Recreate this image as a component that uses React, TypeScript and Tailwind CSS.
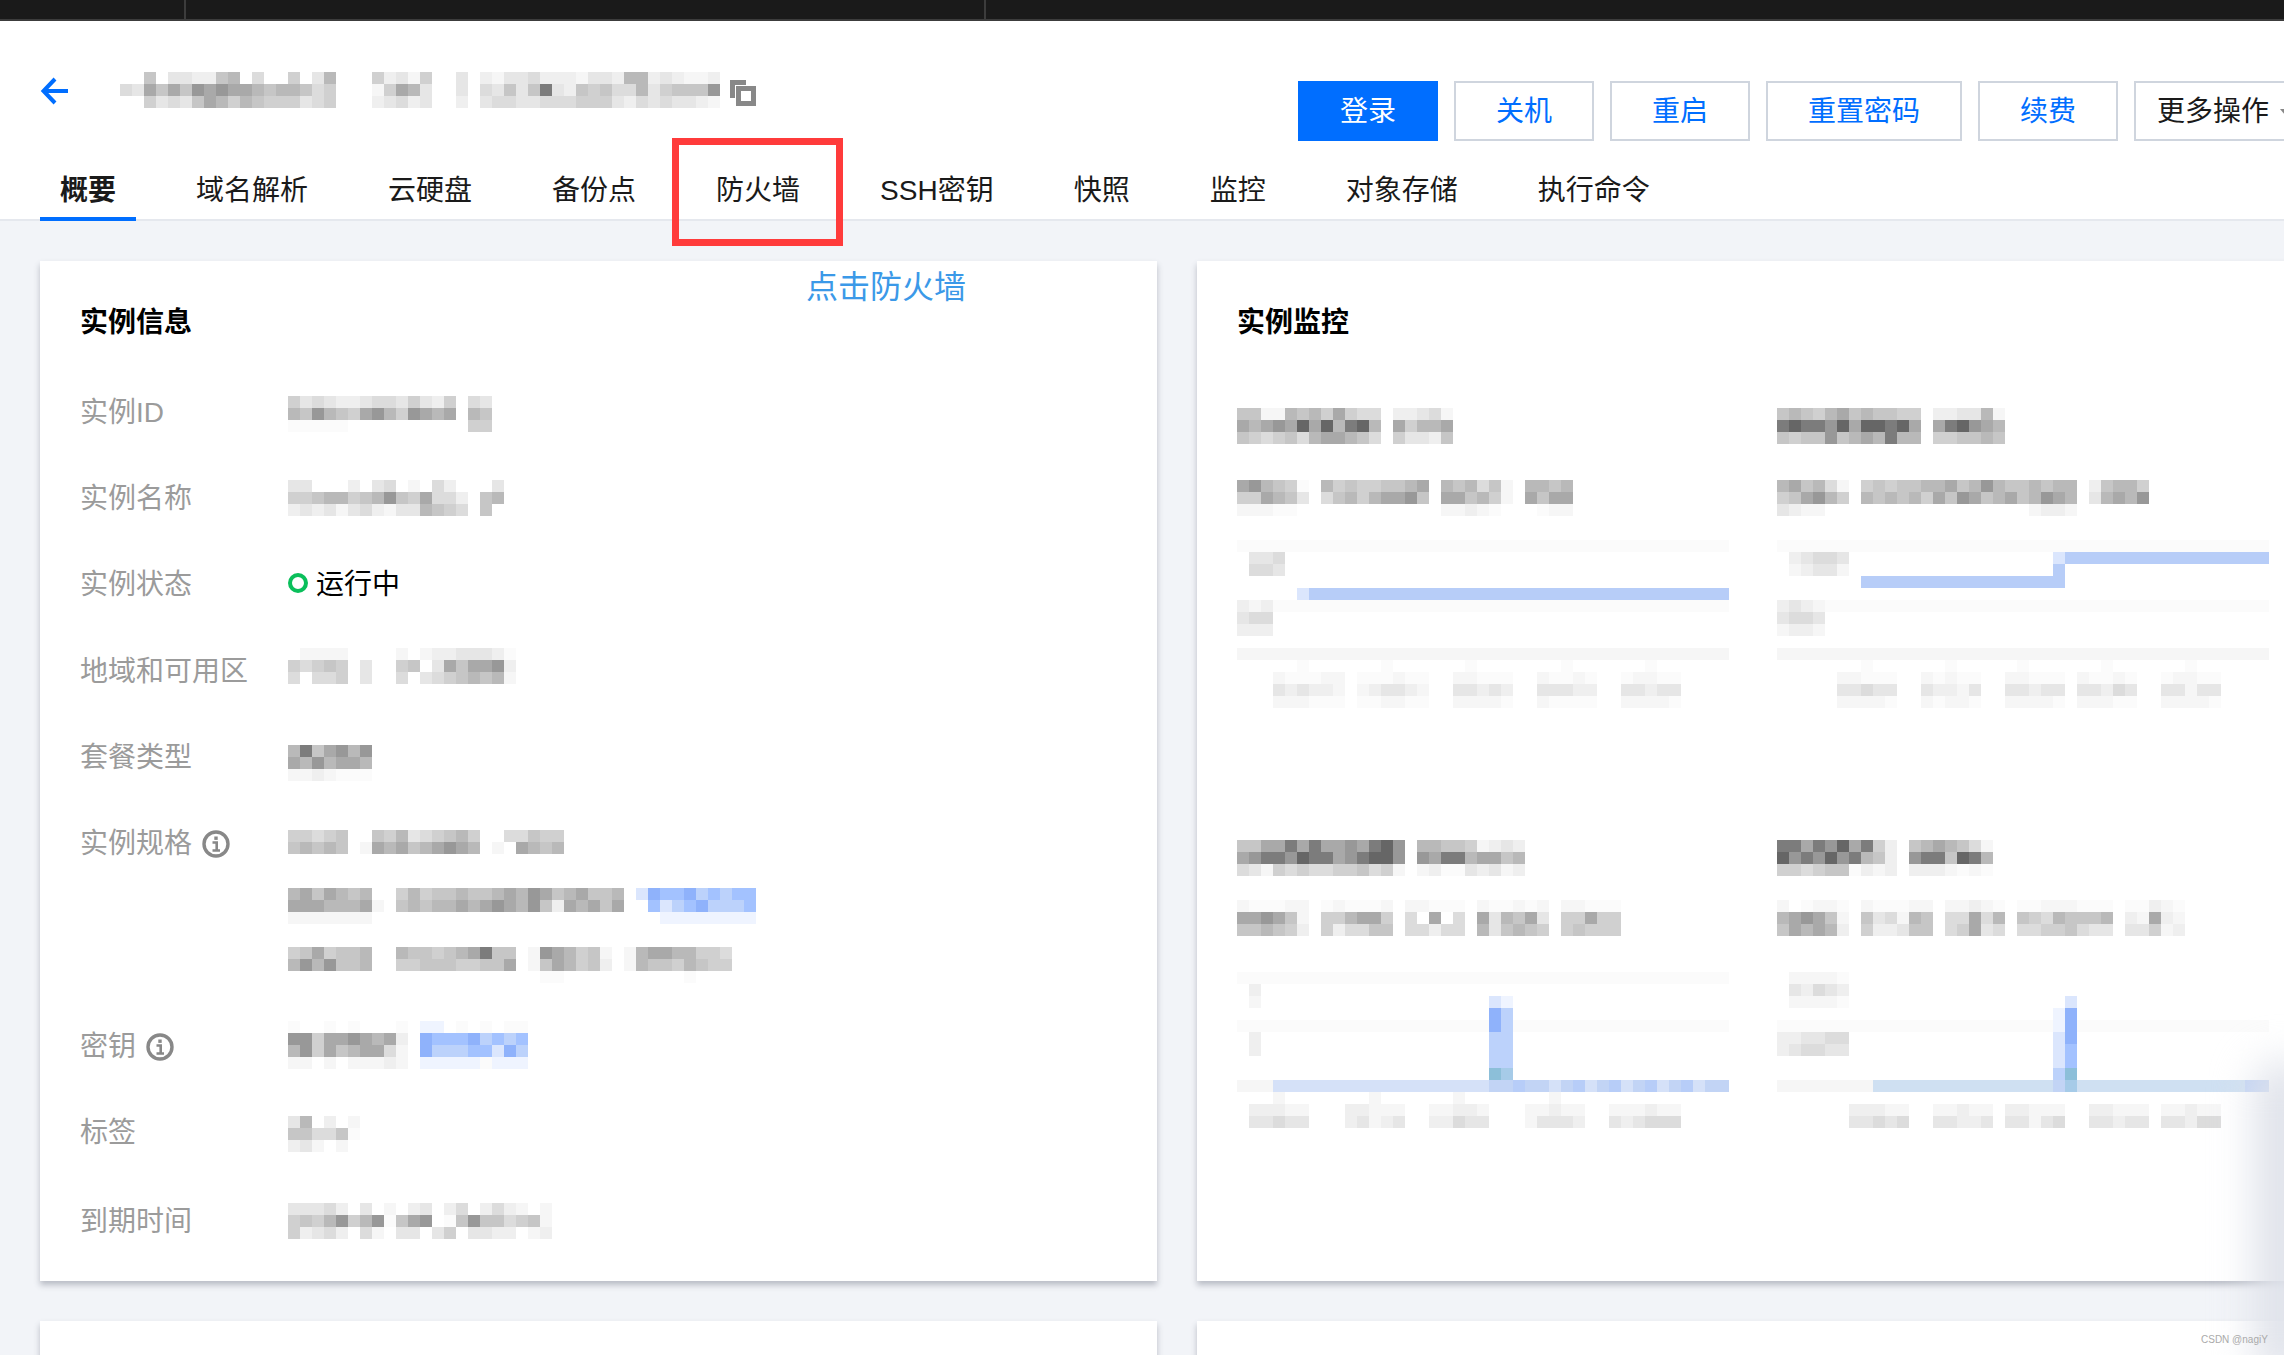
const palette: Record<string, string> = {
  "0": "#fbfbfb", "1": "#f6f6f6", "2": "#efefef", "3": "#e6e6e6", "4": "#dcdcdc", "5": "#d0d0d0",
  "6": "#c6c6c6", "7": "#b9b9b9", "8": "#a9a9a9", "9": "#989898", x: "#7c7c7c", y: "#666666",
  a: "#8fb2fb", b: "#a3c2ff", c: "#bcd2fb", d: "#dbe6fd", e: "#eff4ff", f: "#b7cdf8",
  g: "#8cbfd9", h: "#a6cbe8", i: "#d5e1f8", j: "#cfe0f2", k: "#c2d4f5",
};

// blurred-out text and charts are drawn as a grid of 12px cells
const Mosaic = ({ rows, className = "" }: { rows: string[]; className?: string }) => {
  const cols = Math.max(...rows.map((r) => r.length));
  return (
    <svg width={cols * 12} height={rows.length * 12} shapeRendering="crispEdges" className={`block shrink-0 ${className}`}>
      {rows.map((row, y) =>
        row.split("").map((c, x) =>
          palette[c] ? <rect key={`${x}-${y}`} x={x * 12} y={y * 12} width={12} height={12} fill={palette[c]} /> : null
        )
      )}
    </svg>
  );
};

const sp = (n: number) => ".".repeat(n);
const fill = (c: string, n = 41) => c.repeat(n);

const InfoIcon = () => (
  <svg width="28" height="28" viewBox="0 0 28 28" fill="none" className="shrink-0">
    <circle cx="14" cy="14" r="12" stroke="#888" strokeWidth="3.4" />
    <rect x="12.3" y="6.5" width="3.4" height="3.4" fill="#888" />
    <path d="M10.5 12.5h4.2v7.5M10.5 20.5h7.5" stroke="#888" strokeWidth="2.6" />
  </svg>
);

const tabs = ["概要", "域名解析", "云硬盘", "备份点", "防火墙", "SSH密钥", "快照", "监控", "对象存储", "执行命令"];
const actions = ["关机", "重启", "重置密码", "续费"];

const Label = ({ text, info }: { text: string; info?: boolean }) => (
  <div className="flex items-center gap-[10px] w-[208px] h-[86px] pt-[4px] shrink-0 text-[#9b9b9b]">
    {text}
    {info && <InfoIcon />}
  </div>
);

const InfoRow = ({ text, info, className = "", children }: { text: string; info?: boolean; className?: string; children: React.ReactNode }) => (
  <div className={`flex items-center h-[86px] ${className}`}>
    <Label text={text} info={info} />
    {children}
  </div>
);

const Monitor = ({ title, sub, chart }: { title: string[]; sub: string[]; chart: string[] }) => (
  <div className="flex flex-col">
    <Mosaic rows={title} />
    <Mosaic rows={sub} className="mt-[24px]" />
    <Mosaic rows={chart} className="mt-[24px]" />
  </div>
);

const chartA = [
  fill("0"),
  ".334",
  ".443",
  "",
  sp(5) + "d" + fill("f", 35),
  "212" + fill("0", 38),
  "344",
  "222",
  "",
  fill("1"),
  sp(5) + "0" + sp(6) + "0" + sp(6) + "0" + sp(7) + "0" + sp(6) + "0",
  "...100011.000100..11000..10010..01100....",
  "...323221.123321..33232..33322..33233....",
  "...111000.001100..11110..10000..11110....",
];

const chartB = [
  fill("0"),
  ".23443" + sp(17) + "d" + fill("f", 17),
  ".12331" + sp(17) + "f",
  sp(7) + fill("f", 17),
  "",
  "2321" + fill("0", 37),
  "3443",
  "1221",
  "",
  fill("1"),
  sp(7) + "0" + sp(6) + "0" + sp(5) + "0" + sp(6) + "0" + sp(6) + "0",
  ".....11000..10100..11000.10010..01100....",
  ".....33433..32213..33233.33243..33133....",
  ".....11110..10110..11110.11100..11110....",
];

const chartC = [
  fill("0"),
  ".2",
  ".1" + sp(19) + "de",
  sp(21) + "ac",
  fill("0", 21) + "ac" + fill("0", 18),
  ".2" + sp(19) + "cc",
  ".2" + sp(19) + "cc",
  sp(21) + "cc",
  sp(21) + "gh",
  "111" + fill("i", 18) + "kkfkkikfikfikfikfikk",
  "...1.......1......1.......1",
  ".22211...22111..11221...11211..111211....",
  ".33433...23123..22433...13332..323444....",
];

const chartD = [
  ".11110",
  ".32432",
  ".11110" + sp(18) + "d",
  sp(23) + "ea",
  fill("0", 23) + "ea" + fill("0", 16),
  "223344" + sp(17) + "da",
  "234433" + sp(17) + "db",
  sp(23) + "db",
  sp(23) + "cg",
  fill("1", 8) + fill("j", 15) + "kh" + fill("j", 14) + "kk",
  "",
  "......22211..11211.22111..22111.11211....",
  "......33434..33223.33134..33233.33244....",
];

const App = () => {
  return (
    <div className="relative w-[2284px] h-[1355px] overflow-hidden bg-[#f2f4f8] text-[28px] text-[#1a1a1a] font-['Liberation_Sans','Noto_Sans_CJK_SC',sans-serif]">
      <div className="flex h-[21px] bg-[#1a1a1a] border-b-2 border-[#3c3c3c]">
        <div className="w-[186px] border-r-2 border-[#3c3c3c]" />
        <div className="w-[800px] border-r-2 border-[#3c3c3c]" />
      </div>

      <div className="bg-white">
        <div className="flex justify-between items-start h-[120px] pl-[40px]">
          <div className="flex items-center mt-[51px]">
            <svg width="28" height="28" viewBox="0 0 28 28" fill="none" className="mr-[52px] mt-[2px]">
              <path d="M15 2 3.5 14 15 26M4 14h24" stroke="#006eff" strokeWidth="4" />
            </svg>
            <Mosaic
              rows={[
                "..6.332267.4..5.37...52315..3.21334222133277232112",
                "438686989887677645...15873..3.43636x32656447356669",
                "..5343687576555345...23423..2.34433444555324343321",
              ]}
            />
            <svg width="26" height="26" viewBox="0 0 26 26" className="ml-[10px] mt-[6px]" fill="none">
              <path d="M16 2.5H2.5V18" stroke="#888" strokeWidth="5" />
              <rect x="8.5" y="8.5" width="15" height="15" stroke="#888" strokeWidth="5" />
            </svg>
          </div>
          <div className="flex gap-[16px] mt-[60px] mr-[-30px]">
            <div className="flex items-center justify-center h-[60px] w-[140px] pt-[2px] bg-[#006eff] text-white">登录</div>
            {actions.map((a) => (
              <div key={a} className="flex items-center h-[60px] px-[40px] pt-[2px] bg-white border-2 border-[#cfd5de] text-[#006eff]">
                {a}
              </div>
            ))}
            <div className="flex items-center h-[60px] w-[180px] pl-[21px] pt-[2px] bg-white border-2 border-[#cfd5de] shrink-0">
              更多操作
              <svg width="10" height="6" viewBox="0 0 10 6" className="ml-[11px] shrink-0">
                <path d="M0 0h10L5 6z" fill="#888" />
              </svg>
            </div>
          </div>
        </div>

        <div className="flex gap-[40px] h-[80px] pl-[40px] border-b-2 border-[#e5e8ee]">
          {tabs.map((t, i) => (
            <div
              key={t}
              className={
                i === 0
                  ? "h-[80px] px-[20px] pt-[24px] border-b-4 border-[#006eff] font-bold flex items-center"
                  : "h-[80px] px-[20px] pt-[24px] border-b-4 border-transparent flex items-center"
              }
            >
              {t}
            </div>
          ))}
        </div>
      </div>

      <div className="grid grid-cols-[1117px_1117px] gap-[40px] pt-[40px] pl-[40px]">
        <div className="h-[1020px] bg-white shadow-[0_4px_6px_rgba(54,58,80,0.3)] px-[40px] pt-[40px]">
          <div className="h-[40px] pt-[3px] flex items-center font-bold text-black">实例信息</div>
          <div className="mt-[27px]">
            <InfoRow text="实例ID">
              <Mosaic
                rows={["53432234435325.43", "76976589759878.76", "00000..........55"]}
                className="mt-[6px]"
              />
            </InfoRow>
            <InfoRow text="实例名称">
              <Mosaic
                rows={["33...2.34.1.42...3", "556775679658442.67", "232313421337654.6."]}
                className="mt-[2px]"
              />
            </InfoRow>
            <InfoRow text="实例状态">
              <div className="flex items-center gap-[8px] text-black">
                <div className="w-[20px] h-[20px] rounded-full border-[4px] border-[#0abf5b]" />
                <span className="pt-[3px]">运行中</span>
              </div>
            </InfoRow>
            <InfoRow text="地域和可用区" className="mt-[1px]">
              <Mosaic
                rows={[".1111....1.12233320", "54565.3..56.3868892", "4.445.3..4.34567671"]}
                className="mb-[8px]"
              />
            </InfoRow>
            <InfoRow text="套餐类型">
              <Mosaic rows={["7x68979", "8797887", "1121000"]} className="mt-[14px]" />
            </InfoRow>
            <div className="flex items-start">
              <Label text="实例规格" info />
              <div className="flex flex-col pt-[14px] pb-[15px] flex-1">
                <div className="flex items-center h-[58px]">
                  <Mosaic rows={["55456..657345675..44655", "67676.1878678987.1.8767"]} />
                </div>
                <div className="flex items-center h-[58px]">
                  <Mosaic
                    rows={[
                      "7868767..5756676678798678667.dabbacbcbb",
                      "88877781.6767787898796287868..bdcbacccb",
                      "1111111" + sp(23) + ".eeeeeeee",
                    ]}
                    className="mt-[12px]"
                  />
                </div>
                <div className="flex items-center h-[58px]">
                  <Mosaic
                    rows={[
                      "5685667..7665678x66.1987561.178877554",
                      "7979667..5566655668.1687562.176657655",
                      sp(21) + "00" + sp(10) + "0",
                    ]}
                    className="mt-[14px]"
                  />
                </div>
              </div>
            </div>
            <InfoRow text="密钥" info>
              <Mosaic
                rows={["0..0.0...0.ee.0.0.00", "9958898782.abbbacbcb", "7958678841.acccbbdac", "11.1.11121.eeeee0eee"]}
              />
            </InfoRow>
            <InfoRow text="标签">
              <Mosaic rows={["37.2.1", "664460", "231.1"]} className="mt-[6px]" />
            </InfoRow>
            <InfoRow text="到期时间" className="mt-[3px]">
              <Mosaic
                rows={["33342.3.1.23.24.2421.1", "565795790689.069664561", "52342.41.33.35.3322.12"]}
                className="mt-[2px]"
              />
            </InfoRow>
          </div>
        </div>

        <div className="h-[1020px] bg-white shadow-[0_4px_6px_rgba(54,58,80,0.3)] px-[40px] pt-[40px]">
          <div className="h-[40px] pt-[3px] flex items-center font-bold text-black">实例监控</div>
          <div className="mt-[67px] grid grid-cols-[492px_492px] gap-x-[48px] gap-y-[132px]">
            <Monitor
              title={["661176758544.22341", "87898y8y7xy7.85778", "654564788764.53326"]}
              sub={["", "897650.756556678.767461.7767", "558763.467578896.886751.8688", "11100" + sp(12) + "11210" + sp(3) + "011"]}
              chart={chartA}
            />
            <Monitor
              title={["676578676655.223371", "xyxx9y8yyxy8.8xy987", "656696787x77.556676"]}
              sub={["", "786741.565667786797667677.26775", "568975.767675869867867987.37879", "3211" + sp(17) + "1221"]}
              chart={chartB}
            />
            <Monitor
              title={["6688x8x8898xy9.776651232", "89xx9yxx89xyy9.98xx78867", "43154544556451.120032312"]}
              sub={[
                "100011.010001.11000.100101.11000",
                "889861.557885.4.8.4.837683.55855",
                "667652.524466.44244.736765.56555",
                "",
              ]}
              chart={chartC}
            />
            <Monitor
              title={["xx8x9y8x52.6787641", "y9x9y9x762.9xx6yx7", "5545660212.2221010"]}
              sub={[
                "1.0110.100011.11210.00111000.00210",
                "789861.634176.44847.65476667.21821",
                "687872.522366.45834.44556433.33512",
                "",
              ]}
              chart={chartD}
            />
          </div>
        </div>

        <div className="h-[200px] bg-white shadow-[0_4px_6px_rgba(54,58,80,0.3)]" />
        <div className="h-[200px] bg-white shadow-[0_4px_6px_rgba(54,58,80,0.3)]" />
      </div>

      {/* annotation drawn over the screenshot */}
      <div className="absolute left-[672px] top-[138px] w-[171px] h-[108px] border-[7px] border-[#ff3b3b]" />
      <div className="absolute left-[806px] top-[267px] text-[32px] leading-[40px] text-[#3b99e8]">点击防火墙</div>

      <div className="absolute right-[-30px] top-[1060px] w-[60px] h-[320px] rounded-full bg-[#dfe2ea] blur-[20px]" />
      <div className="absolute left-[2201px] top-[1332px] text-[10px] text-[#aaaaaa]">CSDN @nagiY</div>
    </div>
  );
};

export default App;
